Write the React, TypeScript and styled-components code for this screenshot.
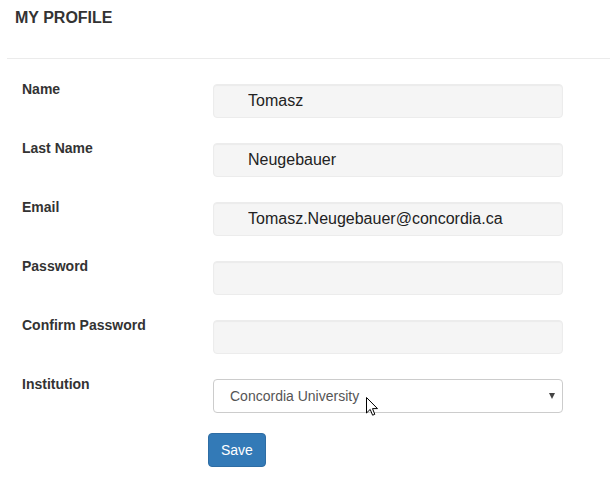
import React from "react";
import styled, { createGlobalStyle } from "styled-components";

const GlobalStyle = createGlobalStyle`
  html, body { margin: 0; padding: 0; background: #fff; }
  body { font-family: "Liberation Sans", Arial, sans-serif; color: #333; }
  * { box-sizing: border-box; }
`;

const Page = styled.div`
  width: 610px;
  height: 479px;
  padding-left: 7px;
  overflow: hidden;
`;

const Header = styled.div`
  padding: 8px 8px 30px;
  border-bottom: 1px solid #ebebeb;
`;

const Title = styled.h1`
  margin: 0;
  font-size: 16px;
  line-height: 20px;
  font-weight: bold;
  color: #333;
`;

const Form = styled.form`
  padding: 20px 15px 0;
  display: grid;
  grid-template-columns: 186px 355px;
  row-gap: 20px;
`;

const Label = styled.label`
  font-size: 14px;
  line-height: 20px;
  font-weight: bold;
  color: #333;
`;

const Input = styled.input`
  margin: 5px 0 0 5px;
  width: 350px;
  height: 34px;
  padding: 0 10px 0 34px;
  border: 1px solid #ececec;
  border-radius: 4px;
  background: #f5f5f5;
  box-shadow: inset 0 1px 1px rgba(0, 0, 0, 0.04);
  font-family: "Liberation Sans", Arial, sans-serif;
  font-size: 16px;
  color: #222;
  outline: none;
`;

const SelectWrap = styled.div`
  position: relative;
  margin: 5px 0 0 5px;
  width: 350px;
  height: 34px;
`;

const Select = styled.select`
  appearance: none;
  -webkit-appearance: none;
  width: 100%;
  height: 100%;
  padding: 0 24px 0 16px;
  border: 1px solid #cccccc;
  border-radius: 4px;
  background: #fff;
  font-family: "Liberation Sans", Arial, sans-serif;
  font-size: 14px;
  color: #555;
  outline: none;
`;

const Arrow = styled.span`
  position: absolute;
  right: 8px;
  top: 14px;
  width: 0;
  height: 0;
  border-left: 3.5px solid transparent;
  border-right: 3.5px solid transparent;
  border-top: 6px solid #444;
  pointer-events: none;
`;

const Cursor = styled.svg`
  position: absolute;
  left: 153px;
  top: 18px;
  pointer-events: none;
`;

const Actions = styled.div`
  grid-column: 2;
`;

const Button = styled.button`
  height: 34px;
  padding: 6px 12px;
  border: 1px solid #2e6da4;
  border-radius: 4px;
  background: #337ab7;
  color: #fff;
  font-family: "Liberation Sans", Arial, sans-serif;
  font-size: 14px;
  line-height: 20px;
`;

const fields: { label: string; value: string; type?: string }[] = [
  { label: "Name", value: "Tomasz" },
  { label: "Last Name", value: "Neugebauer" },
  { label: "Email", value: "Tomasz.Neugebauer@concordia.ca" },
  { label: "Password", value: "", type: "password" },
  { label: "Confirm Password", value: "", type: "password" },
];

export default function App() {
  return (
    <Page>
      <GlobalStyle />
      <Header>
        <Title>MY PROFILE</Title>
      </Header>
      <Form onSubmit={(e) => e.preventDefault()}>
        {fields.map((f) => (
          <React.Fragment key={f.label}>
            <Label>{f.label}</Label>
            <Input type={f.type ?? "text"} defaultValue={f.value} />
          </React.Fragment>
        ))}
        <Label>Institution</Label>
        <SelectWrap>
          <Select defaultValue="concordia">
            <option value="concordia">Concordia University</option>
          </Select>
          <Arrow />
          <Cursor width="13" height="20" viewBox="0 0 13 20">
            <path
              d="M0.5 0.5 L0.5 16 L4.2 12.4 L6.6 18.2 L8.8 17.3 L6.5 11.6 L11.5 11.6 Z"
              fill="#fff"
              stroke="#000"
              strokeWidth="1"
              strokeLinejoin="miter"
            />
          </Cursor>
        </SelectWrap>
        <Actions>
          <Button type="submit">Save</Button>
        </Actions>
      </Form>
    </Page>
  );
}
